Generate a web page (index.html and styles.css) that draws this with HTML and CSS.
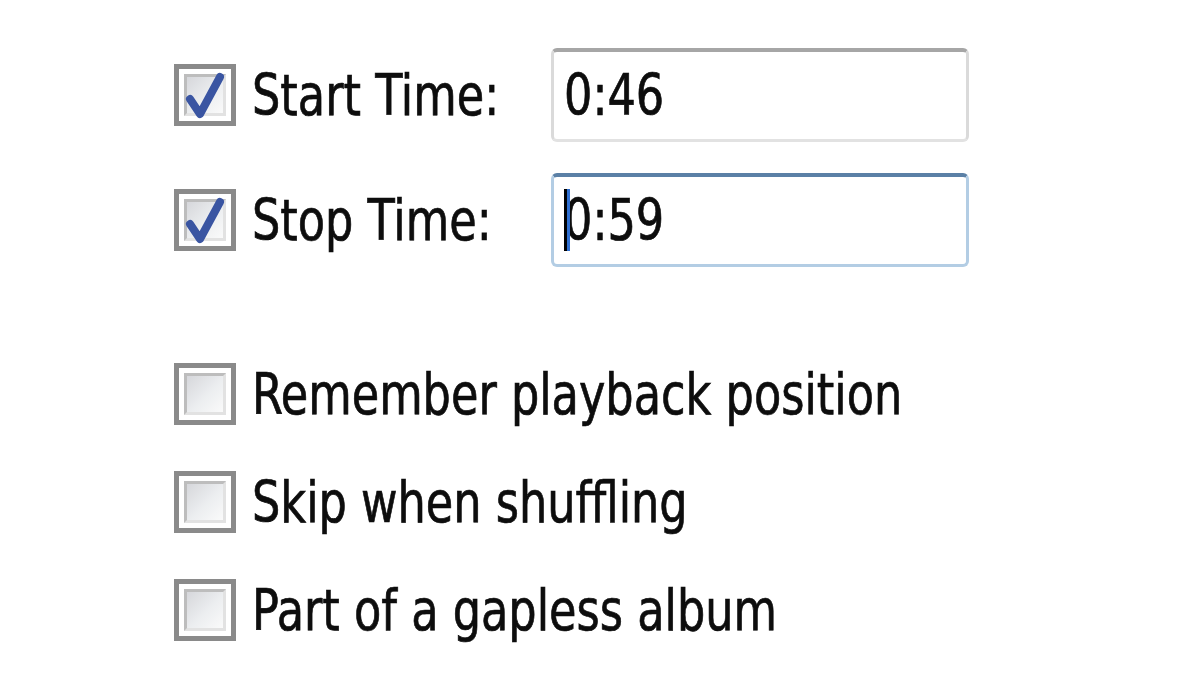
FILE: index.html
```html
<!DOCTYPE html>
<html>
  <head>
    <title>Options</title>
    <meta name="viewport" content="width=device-width, initial-scale=1.0" />
    <link rel="stylesheet" href="styles.css">
  </head>
  <body>
    <div class="panel">
      <div class="time-rows">
        <div class="time-row">
          <span class="check checked">
            <span class="check-inner"></span>
            <svg class="tick" viewBox="0 0 62 62"><path d="M16 35 L26 50 L46 13" /></svg>
          </span>
          <span class="label">Start Time:</span>
          <div class="field"><span class="text">0:46</span></div>
        </div>
        <div class="time-row">
          <span class="check checked">
            <span class="check-inner"></span>
            <svg class="tick" viewBox="0 0 62 62"><path d="M16 35 L26 50 L46 13" /></svg>
          </span>
          <span class="label">Stop Time:</span>
          <div class="field focused"><span class="caret"></span><span class="text">0:59</span></div>
        </div>
      </div>

      <div class="options">
        <div class="option">
          <span class="check"><span class="check-inner"></span></span>
          <span class="label">Remember playback position</span>
        </div>
        <div class="option">
          <span class="check"><span class="check-inner"></span></span>
          <span class="label">Skip when shuffling</span>
        </div>
        <div class="option">
          <span class="check"><span class="check-inner"></span></span>
          <span class="label">Part of a gapless album</span>
        </div>
      </div>
    </div>
  </body>
</html>
```

FILE: styles.css
```css
body {
  margin: 0;
  background: #ffffff;
  font-family: "DejaVu Sans Condensed", "DejaVu Sans", sans-serif;
  font-size: 57px;
  color: #0d0d0d;
}
.panel {
  width: 1200px;
  height: 675px;
  box-sizing: border-box;
  padding: 48px 0 0 174px;
}
.time-rows {
  display: flex;
  flex-direction: column;
  gap: 31px;
}
.time-row {
  display: grid;
  grid-template-columns: 62px 283px 418px;
  column-gap: 16px;
  align-items: center;
}
.options {
  margin-top: 96px;
  display: flex;
  flex-direction: column;
  gap: 46px;
}
.option {
  display: flex;
  align-items: center;
  gap: 16px;
}
/* the dialog font is narrower than anything installed */
.label,
.text {
  display: inline-block;
  line-height: 1;
  white-space: nowrap;
  -webkit-text-stroke: 0.7px #0d0d0d;
  transform: scaleX(0.87);
  transform-origin: left center;
}
.check {
  position: relative;
  display: block;
  width: 62px;
  height: 62px;
  box-sizing: border-box;
  border: 5px solid #8a8a8a;
  padding: 5px;
  background: #ffffff;
}
.check-inner {
  display: block;
  width: 100%;
  height: 100%;
  box-sizing: border-box;
  border: 3px solid #bdbdbd;
  border-right-color: #e2e2e2;
  border-bottom-color: #e2e2e2;
  background: linear-gradient(135deg, #d6d7db 0%, #eceef0 55%, #fafafa 100%);
}
.tick {
  position: absolute;
  left: -5px;
  top: -5px;
  width: 62px;
  height: 62px;
}
.tick path {
  fill: none;
  stroke: #3a55a2;
  stroke-width: 8;
  stroke-linecap: round;
  stroke-linejoin: round;
}
.field {
  position: relative;
  height: 94px;
  box-sizing: border-box;
  padding-left: 10px;
  display: flex;
  align-items: center;
  border: 3px solid #dadada;
  border-top: 4px solid #a6a6a6;
  border-bottom-color: #e2e2e2;
  border-radius: 6px;
  background: #ffffff;
}
.field.focused {
  border-color: #b3cde4;
  border-top-color: #5b80a6;
}
.caret {
  position: absolute;
  left: 10px;
  top: 12px;
  width: 3px;
  height: 62px;
  background: #000000;
  box-shadow: 3px 0 0 #2f6fd0;
  z-index: 1;
}
```
